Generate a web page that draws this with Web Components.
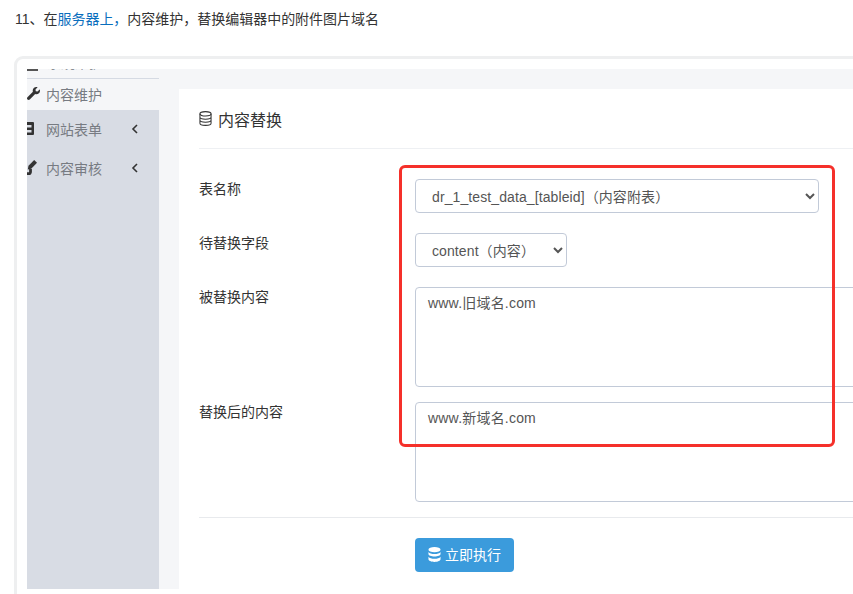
<!DOCTYPE html>
<html>
  <head>
    <meta charset="utf-8" />
    <title>内容替换</title>
    <style>
      html, body { margin: 0; height: 594px; overflow: hidden; background: #fff; }
      body { font-family: "Liberation Sans", "Noto Sans CJK SC", sans-serif; font-size: 14px; color: #333; }
    </style>
  </head>
  <body>
    <article-line>11、在<a slot="link">服务器上，</a></article-line>
    <shot-frame>
      <side-bar slot="side">
        <nav-item active icon="wrench">内容维护</nav-item>
        <nav-item arrow icon="table">网站表单</nav-item>
        <nav-item arrow icon="edit">内容审核</nav-item>
      </side-bar>
      <form-card title="内容替换">
        <form-row label="表名称">
          <select style="width:404px">
            <option>dr_1_test_data_[tableid]（内容附表）</option>
          </select>
        </form-row>
        <form-row label="待替换字段">
          <select style="width:152px">
            <option>content（内容）</option>
          </select>
        </form-row>
        <form-row label="被替换内容" area><textarea>www.旧域名.com</textarea></form-row>
        <form-row label="替换后的内容" area><textarea>www.新域名.com</textarea></form-row>
        <run-button slot="actions">立即执行</run-button>
      </form-card>
    </shot-frame>
    <red-box></red-box>

    <script type="text/javascript">
      const DB_SOLID = `<svg viewBox="0 0 14 16" width="13" height="15"><g fill="currentColor"><ellipse cx="7" cy="2.800" rx="6.500" ry="2.800"/><path d="M.5 5.200c1 1.500 3.600 2.300 6.500 2.300s5.500-.8 6.500-2.300v2.300c0 1.500-2.900 2.700-6.500 2.700S.5 9 .5 7.500z"/><path d="M.5 10.300c1 1.500 3.600 2.300 6.500 2.300s5.500-.8 6.500-2.300v2.900c0 1.500-2.900 2.800-6.500 2.800S.5 14.700.5 13.200z"/></g></svg>`;
      const ICONS = {
        wrench: `<svg viewBox="0 0 512 512" width="13" height="13"><path fill="#333" d="M507.73 109.1c-2.24-9.03-13.54-12.09-20.12-5.51l-74.36 74.36-67.88-11.31-11.31-67.88 74.36-74.36c6.62-6.62 3.43-17.9-5.66-20.16-47.38-11.74-99.55.91-136.58 37.93-39.64 39.64-50.55 97.1-34.05 147.2L18.74 402.76c-24.99 24.99-24.99 65.51 0 90.5 24.99 24.99 65.51 24.99 90.5 0l213.21-213.21c50.12 16.71 107.47 5.68 147.37-34.22 37.07-37.07 49.7-89.32 37.91-136.73z"/></svg>`,
        table: `<svg viewBox="0 0 7 13" width="7" height="13"><path fill="#333" fill-rule="evenodd" d="M0 0h6a1 1 0 0 1 1 1v11a1 1 0 0 1-1 1H0v-2.500h4.500V8H0V5.500h4.500V3H0z"/></svg>`,
        edit: `<svg viewBox="0 0 10 15" width="10" height="15"><path fill="#333" d="M7.200 0 10 2.800 4.200 8.800 .8 9.500 1.500 5.800z"/><path fill="none" stroke="#333" stroke-width="2.800" d="M0 13.600h2a1.500 1.500 0 0 0 1.500-1.500V9"/></svg>`,
      };

      class ArticleLine extends HTMLElement {
        constructor() {
          super();
          this.attachShadow({ mode: "open" });
          this.shadowRoot.innerHTML = `
          <style>
            :host { display: block; padding: 9px 15px 0; height: 56px; line-height: 20px; font-size: 14px; letter-spacing: -.02px; color: #333; box-sizing: border-box; }
            ::slotted(a) { color: #0a6ebd; }
          </style>
          <slot></slot><slot name="link"></slot>内容维护，替换编辑器中的附件图片域名`;
        }
      }

      class ShotFrame extends HTMLElement {
        constructor() {
          super();
          this.attachShadow({ mode: "open" });
          this.shadowRoot.innerHTML = `
          <style>
            :host { display: block; margin-left: 14px; width: 880px; height: 538px; padding: 10px; border: 3px solid #eeeff0; border-bottom: 0; border-radius: 9px 9px 0 0; box-sizing: border-box; }
            .inner { display: flex; height: 520px; background: #f5f6f8; overflow: hidden; }
            .main { flex: 1; padding: 20px 0 0 20px; min-width: 0; }
          </style>
          <div class="inner">
            <slot name="side"></slot>
            <div class="main"><slot></slot></div>
          </div>`;
        }
      }

      class SideBar extends HTMLElement {
        constructor() {
          super();
          this.attachShadow({ mode: "open" });
          this.shadowRoot.innerHTML = `
          <style>
            :host { display: flex; flex-direction: column; width: 132px; flex: none; background: #d8dce4; }
            .cut { height: 9px; flex: none; overflow: hidden; background: #f5f6f8; border-bottom: 1px solid #d5dae3; color: #8a8d93; line-height: 20px; display: flex; gap: 9px; }
            .cut span { margin-top: -16px; }
            .cut i { display: block; width: 11px; height: 2px; background: #555; }
          </style>
          <div class="cut"><i></i><span>系统维护</span></div>
          <slot></slot>`;
        }
      }

      class NavItem extends HTMLElement {
        connectedCallback() {
          const icon = ICONS[this.getAttribute("icon")];
          const arrow = this.hasAttribute("arrow")
            ? `<svg class="arrow" viewBox="0 0 8 10" width="8" height="10"><path d="M6 1 2 5l4 4" fill="none" stroke="#333" stroke-width="1.600"/></svg>`
            : "";
          this.attachShadow({ mode: "open" });
          this.shadowRoot.innerHTML = `
          <style>
            :host { display: block; height: 39px; color: #777b82; }
            :host([active]) { height: 31px; background: #f5f6f8; }
            .row { display: flex; align-items: center; height: 100%; padding-bottom: 2px; box-sizing: border-box; overflow: hidden; }
            .ic { width: 19px; flex: none; display: flex; align-items: center; }
            .arrow { margin-left: 29px; }
          </style>
          <div class="row"><span class="ic">${icon}</span><slot></slot>${arrow}</div>`;
        }
      }

      class FormCard extends HTMLElement {
        connectedCallback() {
          this.attachShadow({ mode: "open" });
          this.shadowRoot.innerHTML = `
          <style>
            :host { display: block; height: 500px; padding: 0 20px; background: #fff; box-sizing: border-box; }
            .head { display: flex; align-items: center; gap: 6px; height: 60px; box-sizing: border-box; border-bottom: 1px solid #eef0f3; font-size: 16px; color: #333; }
            .body { display: flex; flex-direction: column; padding-top: 30px; }
            .foot { margin-top: 15px; border-top: 1px solid #e8eaed; padding: 20px 0 0 216px; }
          </style>
          <div class="head">
            <svg viewBox="0 0 14 16" width="13" height="15"><g fill="none" stroke="#333" stroke-width="1.100"><ellipse cx="7" cy="3" rx="6" ry="2.400"/><path d="M1 3v10c0 1.300 2.700 2.400 6 2.400s6-1.100 6-2.400V3M1 6.300c0 1.300 2.700 2.400 6 2.400s6-1.100 6-2.400M1 9.700c0 1.300 2.700 2.400 6 2.400s6-1.100 6-2.400"/></g></svg>
            <span>${this.getAttribute("title")}</span>
          </div>
          <div class="body"><slot></slot></div>
          <div class="foot"><slot name="actions"></slot></div>`;
        }
      }

      class FormRow extends HTMLElement {
        connectedCallback() {
          this.attachShadow({ mode: "open" });
          this.shadowRoot.innerHTML = `
          <style>
            :host { display: grid; grid-template-columns: 216px 1fr; margin-bottom: 20px; }
            :host([area]) { margin-bottom: 15px; }
            :host(:last-of-type) { margin-bottom: 0; }
            label { line-height: 18px; color: #333; padding-top: 1px; }
            ::slotted(select), ::slotted(textarea) { font: 14px "Liberation Sans", "Noto Sans CJK SC", sans-serif; color: #555; background: #fff; border: 1px solid #c2cad8; border-radius: 4px; box-sizing: border-box; outline: none; }
            ::slotted(select) { display: block; height: 34px; padding: 2px 12px 0; letter-spacing: .1px; }
            ::slotted(textarea) { display: block; width: 100%; height: 100px; padding: 5px 12px; resize: none; line-height: 20px; letter-spacing: .2px; }
          </style>
          <label>${this.getAttribute("label")}</label>
          <div><slot></slot></div>`;
        }
      }

      class RunButton extends HTMLElement {
        constructor() {
          super();
          this.attachShadow({ mode: "open" });
          this.shadowRoot.innerHTML = `
          <style>
            :host { display: inline-flex; align-items: center; gap: 4px; height: 34px; padding: 0 13px 2px 13px; background: #3b9bdc; color: #fff; border-radius: 4px; font-size: 14px; box-sizing: border-box; }
          </style>
          ${DB_SOLID}<slot></slot>`;
        }
      }

      class RedBox extends HTMLElement {
        constructor() {
          super();
          this.attachShadow({ mode: "open" });
          this.shadowRoot.innerHTML = `
          <style>
            :host { position: absolute; left: 399px; top: 165px; width: 436px; height: 282px; border: 3px solid #f5302a; border-radius: 6px; box-sizing: border-box; pointer-events: none; }
          </style>`;
        }
      }

      customElements.define("article-line", ArticleLine);
      customElements.define("shot-frame", ShotFrame);
      customElements.define("side-bar", SideBar);
      customElements.define("nav-item", NavItem);
      customElements.define("form-card", FormCard);
      customElements.define("form-row", FormRow);
      customElements.define("run-button", RunButton);
      customElements.define("red-box", RedBox);
    </script>
  </body>
</html>
